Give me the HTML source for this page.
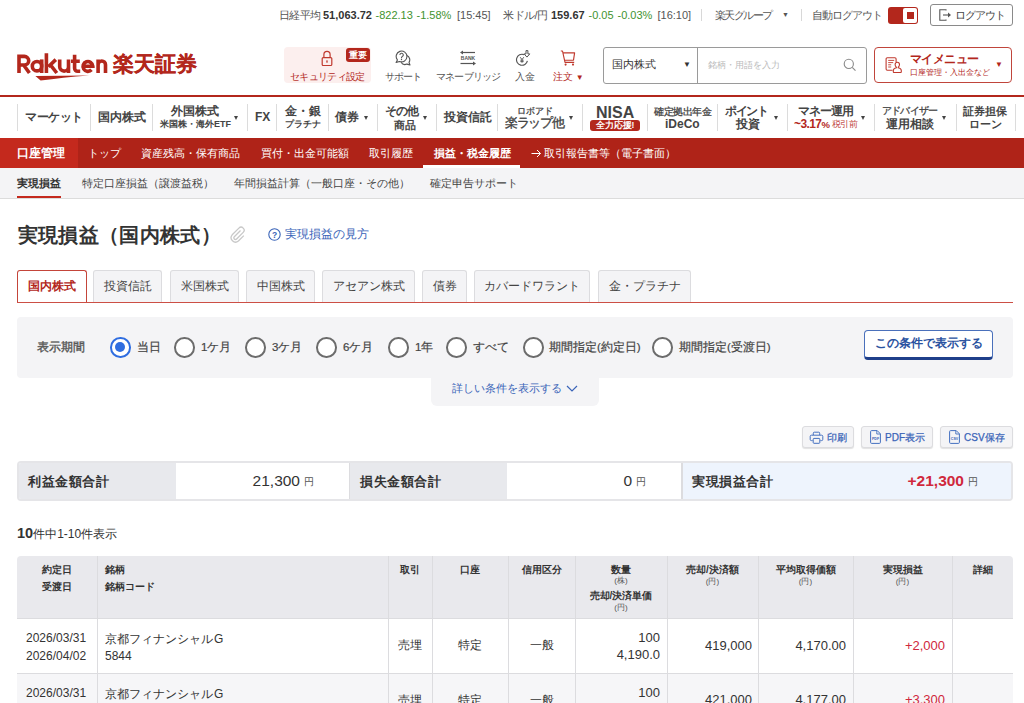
<!DOCTYPE html>
<html lang="ja"><head><meta charset="utf-8">
<style>
*{box-sizing:border-box;margin:0;padding:0}
html,body{width:1024px;height:703px;overflow:hidden;background:#fff}
body{font-family:"Liberation Sans",sans-serif;color:#333;position:relative}
.a{position:absolute;white-space:nowrap}

/* top bar */
.tb{font-size:11px;line-height:14px;color:#555;top:8px}
.tb b{color:#333}
.a.gr{color:#3f932f}
.vsep{position:absolute;width:1px;background:#d8d8d8}
/* header */
.hicon{position:absolute}
.hlbl{font-size:9.5px;line-height:12px;color:#555;top:71px}
/* nav */
.nsep{position:absolute;top:104px;height:27px;width:1px;background:#dcdcdc}
.nv{font-size:12px;font-weight:bold;color:#444;line-height:14px}
.ns{font-size:9px;font-weight:bold;color:#444;line-height:11px}
.tri2{width:0;height:0;border-left:2.7px solid transparent;border-right:2.7px solid transparent;border-top:4.5px solid #444}

.ab{top:146px;font-size:11px;color:#fff;line-height:14px}
.sn{top:176px;font-size:11px;color:#444;line-height:14px}
.tab{top:270px;height:32px;background:#f4f4f6;border:1px solid #dcdcdf;border-bottom:none;border-radius:3px 3px 0 0;font-size:11.5px;color:#444;line-height:30px;text-align:center}
.tab.act{background:#fff;border-color:#c4453a;color:#b3271c;font-weight:bold;height:32px}
.rad{top:337px;width:20.5px;height:20.5px;border:2px solid #6c6c6c;border-radius:50%;background:#fff}
.rad.on{border-color:#2f6de0}
.rad.on::after{content:"";position:absolute;left:3.1px;top:3.1px;width:10.3px;height:10.3px;border-radius:50%;background:#2f6de0}
.rl{top:340px;font-size:11.5px;color:#444;line-height:14px;-webkit-text-stroke:0.2px #444}
.sbtn{top:426px;height:22px;background:#f4f4f6;border:1px solid #dcdcdf;border-radius:3px;box-shadow:0 1px 1px rgba(0,0,0,.12)}
.bt{top:431px;font-size:10px;color:#3a64b8;line-height:13px;-webkit-text-stroke:0.25px #3a64b8}
.sl{top:474px;font-size:13px;letter-spacing:0.6px;font-weight:bold;color:#333;line-height:16px}
.sv{top:472px;font-size:15.5px;color:#333;line-height:18px}
.yen{top:476px;font-size:9.5px;color:#555;line-height:12px}
.csep{position:absolute;top:556px;width:1px;height:160px;background:#dcdcdf}
.th{font-size:10px;font-weight:bold;color:#333;line-height:13px}
.ty{font-size:8px;font-weight:normal;color:#555}
.td{font-size:12px;color:#333;line-height:14px}
.a.red{color:#b3271c}
</style></head><body>

<!-- ===== TOP BAR ===== -->
<div class="a tb" style="left:279px;letter-spacing:-0.6px">日経平均</div><div class="a tb" style="left:323px"><b>51,063.72</b></div><div class="a tb gr" style="left:375.5px">-822.13</div><div class="a tb gr" style="left:416.5px">-1.58%</div><div class="a tb" style="left:457px">[15:45]</div>
<div class="a tb" style="left:503px;letter-spacing:-0.5px">米ドル/円</div><div class="a tb" style="left:551px"><b>159.67</b></div><div class="a tb gr" style="left:588.5px">-0.05</div><div class="a tb gr" style="left:617.5px">-0.03%</div><div class="a tb" style="left:657.5px">[16:10]</div>
<div class="vsep" style="left:701px;top:9px;height:12px"></div>
<div class="a tb" style="left:715px;letter-spacing:-1.6px">楽天グループ</div><div class="a tb" style="left:782px;font-size:7px">▼</div>
<div class="vsep" style="left:801px;top:9px;height:12px"></div>
<div class="a tb" style="left:812px;letter-spacing:-1px">自動ログアウト</div>
<div class="a" style="left:888px;top:7px;width:30px;height:17px;background:#b3271c;border-radius:3px"></div>
<div class="a" style="left:903px;top:8px;width:14px;height:15px;background:#fff;border-radius:2px"></div>
<div class="a" style="left:907px;top:12px;width:7px;height:7px;background:#b3271c"></div>
<div class="a" style="left:930px;top:4px;width:83px;height:22px;border:1px solid #8a8a8a;border-radius:3px"></div>
<svg class="a" style="left:939px;top:9px" width="13" height="12" viewBox="0 0 13 12"><path d="M7 1.5V0.8H0.8v10.4H7v-0.7" fill="none" stroke="#555" stroke-width="1.1"/><path d="M4 6h6.5" stroke="#555" stroke-width="1.1"/><path d="M9 3.5L12 6 9 8.5z" fill="#555"/></svg>
<div class="a" style="left:955px;top:8px;font-size:11px;letter-spacing:-1px;line-height:14px;color:#444">ログアウト</div>

<!-- ===== HEADER ===== -->
<svg class="a" style="left:0;top:40px" width="112" height="45" viewBox="0 40 112 45"><g fill="none" stroke="#b3271c" stroke-width="3.6">
<path d="M19 73V56.4h5.4a4.3 4.3 0 0 1 0 8.6H19M23.8 65.2l5.6 7.8"/>
<circle cx="37" cy="66.2" r="4.7"/><path d="M41.7 59.4V73"/>
<path d="M46.4 53.2V73M55.8 59.6l-7.4 7.2M50.6 65.2l6.2 7.8"/>
<path d="M59.7 59.4v7.3a4.4 4.4 0 0 0 8.8 0V59.4M68.5 66v7"/>
<path d="M74.6 54.7v13.6a3 3 0 0 0 3 3h2.6M71 61.3h8.8"/>
<path d="M83 66.2h9.8a4.9 4.9 0 1 0-1.3 3.6"/>
<path d="M98.1 59.4V73M98.1 73v-8.3a3.7 3.7 0 0 1 7.4 0V73"/>
</g><path d="M35.4 76.1L89.2 75.5Q62 77.6 40.6 80.6Z" fill="#b3271c"/></svg>
<div class="a" style="left:113px;top:52px;font-size:20.5px;font-weight:bold;color:#b3271c;line-height:24px;-webkit-text-stroke:0.3px #b3271c">楽天証券</div>

<div class="a" style="left:284px;top:47px;width:87px;height:36px;background:#fcefee;border-radius:4px"></div>
<div class="a" style="left:346px;top:48px;width:24px;height:14px;background:#b3271c;border-radius:3px;color:#fff;font-size:8.5px;font-weight:bold;line-height:14px;text-align:center;letter-spacing:0px">重要</div>
<svg class="a" style="left:320px;top:50px" width="14" height="17" viewBox="0 0 14 17"><path d="M3.9 7.6V4.4a3.1 3.1 0 0 1 6.2 0v3.2" fill="none" stroke="#c0392e" stroke-width="1.2"/><rect x="2.2" y="7.6" width="9.6" height="7.9" rx="1" fill="none" stroke="#c0392e" stroke-width="1.2"/><path d="M6.1 10.4h1.8L7.3 13h-.6z" fill="#c0392e"/></svg>
<div class="a hlbl red" style="left:290px;letter-spacing:-0.7px">セキュリティ設定</div>

<svg class="a" style="left:394px;top:50px" width="18" height="16" viewBox="0 0 18 16"><path d="M5.6 11.5A5.4 5.4 0 1 0 3.4 9.9L2.1 12.4Z" fill="#fff" stroke="#555" stroke-width="1.1" stroke-linejoin="round"/><path d="M12.9 5.6A4.6 4.6 0 0 1 15 12.4L16 14.9 12.9 14.1A4.8 4.8 0 0 1 7 12.3" fill="none" stroke="#555" stroke-width="1.1" stroke-linejoin="round"/><path d="M5.9 4.9a1.7 1.7 0 1 1 2.5 1.5c-.6.3-.9.7-.9 1.3v.5" fill="none" stroke="#555" stroke-width="1.1"/><circle cx="7.5" cy="9.5" r=".7" fill="#555"/></svg>
<div class="a hlbl" style="left:385px;letter-spacing:-1.1px">サポート</div>

<svg class="a" style="left:459px;top:50px" width="18" height="16" viewBox="0 0 18 16"><path d="M16 2.5H2.5" stroke="#555" stroke-width="1.2"/><path d="M4 0.5L1 2.5 4 4.5z" fill="#555"/><path d="M1.5 13.5H15" stroke="#555" stroke-width="1.2"/><path d="M14 11.5L17 13.5 14 15.5z" fill="#555"/><text x="9" y="9.6" font-size="5" font-weight="bold" text-anchor="middle" fill="#555" font-family="Liberation Sans">BANK</text></svg>
<div class="a hlbl" style="left:436px;letter-spacing:-0.8px">マネーブリッジ</div>

<svg class="a" style="left:514px;top:50px" width="18" height="16" viewBox="0 0 18 16"><path d="M9.9 4.6A5.5 5.5 0 1 0 13.4 10.9" fill="none" stroke="#555" stroke-width="1.15"/><path d="M6.2 7.2L8 9.6l1.8-2.4M8 9.6v3.1M6.4 10.2h3.2M6.4 11.6h3.2" fill="none" stroke="#555" stroke-width="0.95"/><path d="M12 0.6h1.9v3.3h1.9l-2.85 3.2-2.85-3.2H12z" fill="#fff" stroke="#555" stroke-width="1" stroke-linejoin="round"/></svg>
<div class="a hlbl" style="left:515px">入金</div>

<svg class="a" style="left:560px;top:50px" width="16" height="16" viewBox="0 0 16 16"><path d="M0.8 1h1.7l2.5 11.3h9.2M3 2.8h11.6l-1.1 7.4H4.4" fill="none" stroke="#c0392e" stroke-width="1.15" stroke-linejoin="round"/><circle cx="5.6" cy="14.6" r="1.05" fill="#c0392e"/><circle cx="13" cy="14.6" r="1.05" fill="#c0392e"/></svg>
<div class="a hlbl red" style="left:553px">注文 <span style="font-size:8px">▼</span></div>

<!-- search -->
<div class="a" style="left:603px;top:47px;width:264px;height:37px;border:1px solid #9a9a9a;border-radius:3px"></div>
<div class="a" style="left:697px;top:47px;width:1px;height:37px;background:#9a9a9a"></div>
<div class="a" style="left:612px;top:57px;font-size:11px;line-height:14px;color:#333">国内株式</div>
<div class="a" style="left:683px;top:59px;font-size:8px;line-height:12px;color:#333">▼</div>
<div class="a" style="left:708px;top:59px;font-size:9.2px;line-height:12px;color:#bbb">銘柄・用語を入力</div>
<svg class="a" style="left:843px;top:58px" width="15" height="15" viewBox="0 0 15 15"><circle cx="5.8" cy="5.9" r="4.6" fill="none" stroke="#8a8a8a" stroke-width="1.1"/><path d="M9.2 9.3l3.3 3.4" stroke="#8a8a8a" stroke-width="1.1"/></svg>

<!-- my menu -->
<div class="a" style="left:874px;top:47px;width:138px;height:36px;border:1px solid #c0453b;border-radius:4px"></div>
<svg class="a" style="left:885px;top:57px" width="18" height="17" viewBox="0 0 18 17"><path d="M7.5 13.3H2.3a1.2 1.2 0 0 1-1.2-1.2V1.9A1.2 1.2 0 0 1 2.3.7h7.6a1.2 1.2 0 0 1 1.2 1.2v3" fill="none" stroke="#c0392e" stroke-width="1.1"/><path d="M3.2 3.4h6M3.2 5.6h5M3.2 7.8h3M3.2 10h3" stroke="#c0392e" stroke-width="0.9"/><path d="M12.3 5.2a2.2 2.4 0 0 1 2.2 2.4c0 1.2-.6 2.2-1.3 2.6v.6c1.8.4 3.1 1.3 3.1 2.8v1.2a.7.7 0 0 1-.7.7H9a.7.7 0 0 1-.7-.7v-1.2c0-1.5 1.3-2.4 3.1-2.8v-.6c-.7-.4-1.3-1.4-1.3-2.6a2.2 2.4 0 0 1 2.2-2.4z" fill="#fff" stroke="#c0392e" stroke-width="1.1"/></svg>
<div class="a red" style="left:910px;top:52px;font-size:12px;letter-spacing:-0.6px;font-weight:bold;line-height:14px">マイメニュー</div>
<div class="a red" style="left:910px;top:67px;font-size:8px;line-height:11px">口座管理・入出金など</div>
<div class="a red" style="left:995px;top:59px;font-size:8px;line-height:12px">▼</div>

<!-- ===== NAV ===== -->
<div class="a" style="left:0;top:95px;width:1024px;height:2px;background:#b3271c"></div>
<div class="nsep" style="left:17px"></div>
<div class="nsep" style="left:90px"></div>
<div class="nsep" style="left:152px"></div>
<div class="nsep" style="left:247px"></div>
<div class="nsep" style="left:276px"></div>
<div class="nsep" style="left:328px"></div>
<div class="nsep" style="left:377px"></div>
<div class="nsep" style="left:436px"></div>
<div class="nsep" style="left:497px"></div>
<div class="nsep" style="left:582px"></div>
<div class="nsep" style="left:647px"></div>
<div class="nsep" style="left:717px"></div>
<div class="nsep" style="left:787px"></div>
<div class="nsep" style="left:874px"></div>
<div class="nsep" style="left:956px"></div>
<div class="nsep" style="left:1015px"></div>

<div class="a nv" style="left:25px;top:110px;letter-spacing:-0.4px">マーケット</div>
<div class="a nv" style="left:98px;top:110px">国内株式</div>
<div class="a nv" style="left:171px;top:104px">外国株式</div>
<div class="a ns" style="left:160px;top:119px">米国株・海外ETF</div>
<div class="a tri2" style="left:234px;top:116px"></div>
<div class="a nv" style="left:255px;top:110px">FX</div>
<div class="a nv" style="left:285px;top:104px">金・銀</div>
<div class="a ns" style="left:285px;top:119px">プラチナ</div>
<div class="a nv" style="left:335px;top:110px">債券</div>
<div class="a tri2" style="left:364px;top:116px"></div>
<div class="a nv" style="left:385px;top:104px;letter-spacing:-0.9px">その他</div>
<div class="a nv" style="left:394px;top:118px;font-size:10.5px">商品</div>
<div class="a tri2" style="left:422.5px;top:116px"></div>
<div class="a nv" style="left:444px;top:110px">投資信託</div>
<div class="a ns" style="left:517px;top:105.5px;font-weight:normal;-webkit-text-stroke:0.3px #444">ロボアド</div>
<div class="a nv" style="left:505px;top:116px;font-size:13px;font-weight:normal;letter-spacing:-1.3px;-webkit-text-stroke:0.35px #444">楽ラップ他</div>
<div class="a tri2" style="left:569px;top:116px"></div>
<div class="a" style="left:596px;top:104px;font-size:16px;font-weight:bold;color:#444;line-height:17px">NISA</div>
<div class="a" style="left:590px;top:120px;width:50px;height:11px;background:#b3271c;border-radius:3px;color:#fff;font-size:8.5px;font-weight:bold;line-height:11px;text-align:center">全力応援!</div>
<div class="a ns" style="left:654px;top:106px;font-size:9.5px;letter-spacing:-0.4px;font-weight:normal;-webkit-text-stroke:0.3px #444">確定拠出年金</div>
<div class="a nv" style="left:665px;top:117px">iDeCo</div>
<div class="a nv" style="left:725px;top:104px;letter-spacing:-1.3px">ポイント</div>
<div class="a nv" style="left:736px;top:117px">投資</div>
<div class="a tri2" style="left:773.5px;top:116px"></div>
<div class="a nv" style="left:798px;top:104px;letter-spacing:-0.9px">マネー運用</div>
<div class="a" style="left:794px;top:118px;font-size:12px;font-weight:bold;color:#b3271c;line-height:12px;letter-spacing:-0.6px">~3.17<span style="font-size:9.5px;letter-spacing:0">%</span></div><div class="a" style="left:831.5px;top:119px;font-size:8.5px;color:#c0453b;line-height:11px;letter-spacing:-0.3px">税引前</div>
<div class="a tri2" style="left:861px;top:116px"></div>
<div class="a ns" style="left:882px;top:105px;font-weight:normal;font-size:10px;letter-spacing:-0.8px;-webkit-text-stroke:0.3px #444">アドバイザー</div>
<div class="a nv" style="left:886px;top:117px">運用相談</div>
<div class="a tri2" style="left:942px;top:116px"></div>
<div class="a nv" style="left:963px;top:104px;font-size:11px">証券担保</div>
<div class="a nv" style="left:969px;top:117px;font-size:11px">ローン</div>


<!-- ===== ACCOUNT BAR ===== -->
<div class="a" style="left:0;top:138px;width:1024px;height:30px;background:#af2318"></div>
<div class="a" style="left:0;top:138px;width:78px;height:30px;background:#c4291d"></div>
<div class="a" style="left:17px;top:146px;font-size:12px;font-weight:bold;color:#fff;line-height:14px">口座管理</div>
<div class="a ab" style="left:88px">トップ</div>
<div class="a ab" style="left:141px">資産残高・保有商品</div>
<div class="a ab" style="left:261px">買付・出金可能額</div>
<div class="a ab" style="left:369px">取引履歴</div>
<div class="a ab" style="left:434px;font-weight:bold">損益・税金履歴</div>
<div class="a" style="left:423px;top:165px;width:97px;height:3px;background:#fff"></div>
<svg class="a" style="left:531px;top:149px" width="11" height="9" viewBox="0 0 11 9"><path d="M0.5 4.5h9M6 1l3.5 3.5L6 8" fill="none" stroke="#fff" stroke-width="1"/></svg><div class="a ab" style="left:544px">取引報告書等（電子書面）</div>

<!-- ===== SUB NAV ===== -->
<div class="a" style="left:0;top:168px;width:1024px;height:31px;background:#f4f4f6;border-bottom:1px solid #dcdcdc"></div>
<div class="a sn" style="left:17px;font-weight:bold;color:#333">実現損益</div>
<div class="a" style="left:17px;top:196px;width:44px;height:2px;background:#c4291d"></div>
<div class="a sn" style="left:82px">特定口座損益（譲渡益税）</div>
<div class="a sn" style="left:234px">年間損益計算（一般口座・その他）</div>
<div class="a sn" style="left:430px">確定申告サポート</div>

<!-- ===== TITLE ===== -->
<div class="a" style="left:17.5px;top:222px;font-size:20px;font-weight:bold;color:#333;line-height:26px;letter-spacing:0.35px">実現損益（国内株式）</div>
<svg class="a" style="left:229px;top:225px" width="17" height="18" viewBox="0 0 17 18"><path d="M11.5 5.5L5.3 11.7a1.6 1.6 0 0 0 2.3 2.3l6.6-6.6a3 3 0 0 0-4.3-4.3L3.2 9.8a4.4 4.4 0 0 0 6.2 6.2l5.4-5.4" fill="none" stroke="#c8c8c8" stroke-width="1.3"/></svg>
<svg class="a" style="left:268px;top:228px" width="13" height="13" viewBox="0 0 13 13"><circle cx="6.5" cy="6.5" r="5.7" fill="none" stroke="#3a64b8" stroke-width="1.1"/><text x="6.5" y="9.6" font-size="8.5" font-weight="bold" text-anchor="middle" fill="#3a64b8" font-family="Liberation Sans">?</text></svg>
<div class="a" style="left:285px;top:227px;font-size:12px;color:#3a64b8;line-height:14px">実現損益の見方</div>

<!-- ===== TABS ===== -->
<div class="a tab act" style="left:17px;width:70px">国内株式</div>
<div class="a tab" style="left:93px;width:69px">投資信託</div>
<div class="a tab" style="left:170px;width:69px">米国株式</div>
<div class="a tab" style="left:246px;width:69px">中国株式</div>
<div class="a tab" style="left:322px;width:93px">アセアン株式</div>
<div class="a tab" style="left:422px;width:45px">債券</div>
<div class="a tab" style="left:474px;width:116px">カバードワラント</div>
<div class="a tab" style="left:598px;width:93px">金・プラチナ</div>

<div class="a" style="left:17px;top:302px;width:996px;height:1px;background:#cc4f45"></div>
<!-- ===== FILTER ===== -->
<div class="a" style="left:17px;top:317px;width:996px;height:61px;background:#f4f4f6;border-radius:4px"></div>
<div class="a" style="left:431px;top:370px;width:168px;height:36px;background:#f4f4f6;border-radius:0 0 6px 6px"></div>
<div class="a" style="left:37px;top:340px;font-size:11.5px;color:#555;line-height:14px;-webkit-text-stroke:0.35px #555">表示期間</div>
<div class="a rad on" style="left:110px"></div><div class="a rl" style="left:137px">当日</div>
<div class="a rad" style="left:174px"></div><div class="a rl" style="left:201px">1ケ月</div>
<div class="a rad" style="left:245px"></div><div class="a rl" style="left:272px">3ケ月</div>
<div class="a rad" style="left:316px"></div><div class="a rl" style="left:343px">6ケ月</div>
<div class="a rad" style="left:388px"></div><div class="a rl" style="left:415px">1年</div>
<div class="a rad" style="left:446px"></div><div class="a rl" style="left:473px">すべて</div>
<div class="a rad" style="left:523px"></div><div class="a rl" style="left:549px">期間指定(約定日)</div>
<div class="a rad" style="left:652px"></div><div class="a rl" style="left:679px">期間指定(受渡日)</div>
<div class="a" style="left:864px;top:330px;width:129px;height:30px;background:#fff;border:1px solid #4a70bb;border-bottom:3px solid #1f3f8a;border-radius:4px;color:#2a52a0;font-size:12px;font-weight:bold;line-height:25px;text-align:center">この条件で表示する</div>
<div class="a" style="left:452px;top:381px;font-size:11px;color:#3a64b8;line-height:14px">詳しい条件を表示する</div>
<svg class="a" style="left:566px;top:385px" width="12" height="8" viewBox="0 0 12 8"><path d="M1 1l5 5 5-5" fill="none" stroke="#3a64b8" stroke-width="1.2"/></svg>

<!-- ===== BUTTONS ===== -->
<div class="a sbtn" style="left:802px;width:52px"></div>
<svg class="a" style="left:809px;top:431px" width="15" height="13" viewBox="0 0 15 13"><path d="M4.3 4V2.2a1 1 0 0 1 1-1h4.4a1 1 0 0 1 1 1V4" fill="none" stroke="#4470c0" stroke-width="1"/><path d="M3.6 9.6H2.4a1.2 1.2 0 0 1-1.2-1.2V5.4a1.2 1.2 0 0 1 1.2-1.2h10.2a1.2 1.2 0 0 1 1.2 1.2v3a1.2 1.2 0 0 1-1.2 1.2h-1.2" fill="none" stroke="#4470c0" stroke-width="1"/><rect x="4.2" y="7.4" width="6.6" height="4.9" rx="0.8" fill="none" stroke="#4470c0" stroke-width="1"/></svg>
<div class="a bt" style="left:827px">印刷</div>
<div class="a sbtn" style="left:861px;width:72px"></div>
<svg class="a" style="left:870px;top:430px" width="11" height="14" viewBox="0 0 11 14"><path d="M1.6 0.6h5.6l3.2 3.2v8.6a1 1 0 0 1-1 1H1.6a1 1 0 0 1-1-1V1.6a1 1 0 0 1 1-1z" fill="none" stroke="#4470c0" stroke-width="1"/><path d="M6.8 0.8v3.2h3.4" fill="none" stroke="#4470c0" stroke-width="0.9"/><text x="5.5" y="9.5" font-size="3.6" font-weight="bold" text-anchor="middle" fill="#3a64b8" font-family="Liberation Sans">PDF</text></svg>
<div class="a bt" style="left:885px">PDF表示</div>
<div class="a sbtn" style="left:940px;width:73px"></div>
<svg class="a" style="left:949px;top:430px" width="11" height="14" viewBox="0 0 11 14"><path d="M1.6 0.6h5.6l3.2 3.2v8.6a1 1 0 0 1-1 1H1.6a1 1 0 0 1-1-1V1.6a1 1 0 0 1 1-1z" fill="none" stroke="#4470c0" stroke-width="1"/><path d="M6.8 0.8v3.2h3.4" fill="none" stroke="#4470c0" stroke-width="0.9"/><text x="5.5" y="9.5" font-size="3.6" font-weight="bold" text-anchor="middle" fill="#3a64b8" font-family="Liberation Sans">CSV</text></svg>
<div class="a bt" style="left:964px">CSV保存</div>

<!-- ===== SUMMARY ===== -->
<div class="a" style="left:17px;top:461px;width:996px;height:40px;border:2px solid #e5e5e8;border-radius:4px;overflow:hidden;background:#fff">
  <div class="a" style="left:0;top:0;width:157px;height:36px;background:#e8e9ed"></div>
  <div class="a" style="left:330px;top:0;width:158px;height:36px;background:#e8e9ed;border-left:1px solid #dcdcdf"></div>
  <div class="a" style="left:662px;top:0;width:332px;height:36px;background:#eef4fd;border-left:2px solid #dcdcdf"></div>
</div>
<div class="a sl" style="left:28px">利益金額合計</div>
<div class="a sv" style="left:200px;width:100px;text-align:right">21,300</div><div class="a yen" style="left:304px">円</div>
<div class="a sl" style="left:360px">損失金額合計</div>
<div class="a sv" style="left:532px;width:100px;text-align:right">0</div><div class="a yen" style="left:636px">円</div>
<div class="a sl" style="left:692px">実現損益合計</div>
<div class="a sv" style="left:864px;width:100px;text-align:right;color:#d0283c;font-weight:bold">+21,300</div><div class="a yen" style="left:968px">円</div>

<div class="a" style="left:17px;top:525px;font-size:12px;color:#333;line-height:16px"><b style="font-size:14.5px">10</b>件中1-10件表示</div>

<!-- ===== TABLE ===== -->
<div class="a" style="left:17px;top:556px;width:996px;height:62px;background:#e9e9ed;border-radius:4px 4px 0 0"></div>
<div class="a" style="left:17px;top:618px;width:996px;height:1px;background:#dcdcdf"></div>
<div class="a" style="left:17px;top:619px;width:996px;height:54px;background:#fff"></div>
<div class="a" style="left:17px;top:673px;width:996px;height:1px;background:#dcdcdf"></div>
<div class="a" style="left:17px;top:674px;width:996px;height:40px;background:#f6f6f8"></div>
<div class="csep" style="left:97px"></div>
<div class="csep" style="left:388px"></div>
<div class="csep" style="left:432px"></div>
<div class="csep" style="left:508px"></div>
<div class="csep" style="left:575px"></div>
<div class="csep" style="left:667px"></div>
<div class="csep" style="left:758px"></div>
<div class="csep" style="left:853px"></div>
<div class="csep" style="left:952px"></div>

<div class="a th" style="left:17px;width:80px;top:561px;text-align:center;line-height:17px">約定日<br>受渡日</div>
<div class="a th" style="left:105px;top:561px;line-height:17px">銘柄<br>銘柄コード</div>
<div class="a th" style="left:388px;width:44px;top:563px;text-align:center">取引</div>
<div class="a th" style="left:432px;width:76px;top:563px;text-align:center">口座</div>
<div class="a th" style="left:508px;width:67px;top:563px;text-align:center">信用区分</div>
<div class="a th" style="left:575px;width:92px;top:563px;text-align:center">数量</div>
<div class="a th ty" style="left:575px;width:92px;top:574px;text-align:center">(株)</div>
<div class="a th" style="left:575px;width:92px;top:589px;text-align:center">売却/決済単価</div>
<div class="a th ty" style="left:575px;width:92px;top:601px;text-align:center">(円)</div>
<div class="a th" style="left:667px;width:91px;top:563px;text-align:center">売却/決済額</div>
<div class="a th ty" style="left:667px;width:91px;top:575px;text-align:center">(円)</div>
<div class="a th" style="left:758px;width:95px;top:563px;text-align:center">平均取得価額</div>
<div class="a th ty" style="left:758px;width:95px;top:575px;text-align:center">(円)</div>
<div class="a th" style="left:853px;width:99px;top:563px;text-align:center">実現損益</div>
<div class="a th ty" style="left:853px;width:99px;top:575px;text-align:center">(円)</div>
<div class="a th" style="left:952px;width:61px;top:563px;text-align:center">詳細</div>

<div class="a td" style="left:26px;top:629px;line-height:18px">2026/03/31<br>2026/04/02</div>
<div class="a td" style="left:105px;top:631px;line-height:17px">京都フィナンシャル<span style="margin-left:1px">G</span><br>5844</div>
<div class="a td" style="left:388px;width:44px;top:638px;text-align:center">売埋</div>
<div class="a td" style="left:432px;width:76px;top:638px;text-align:center">特定</div>
<div class="a td" style="left:508px;width:67px;top:638px;text-align:center">一般</div>
<div class="a td" style="left:575px;width:85px;top:629px;text-align:right;line-height:17px;font-size:13px">100<br>4,190.0</div>
<div class="a td" style="left:667px;width:85px;top:639px;text-align:right;font-size:13px">419,000</div>
<div class="a td" style="left:758px;width:88px;top:639px;text-align:right;font-size:13px">4,170.00</div>
<div class="a td" style="left:853px;width:92px;top:639px;text-align:right;color:#d0283c;font-size:13px">+2,000</div>

<div class="a td" style="left:26px;top:684px;line-height:18px">2026/03/31<br>2026/04/02</div>
<div class="a td" style="left:105px;top:686px;line-height:17px">京都フィナンシャル<span style="margin-left:1px">G</span><br>5844</div>
<div class="a td" style="left:388px;width:44px;top:693px;text-align:center">売埋</div>
<div class="a td" style="left:432px;width:76px;top:693px;text-align:center">特定</div>
<div class="a td" style="left:508px;width:67px;top:693px;text-align:center">一般</div>
<div class="a td" style="left:575px;width:85px;top:684px;text-align:right;line-height:17px;font-size:13px">100<br>4,180.0</div>
<div class="a td" style="left:667px;width:85px;top:693px;text-align:right;font-size:13px">421,000</div>
<div class="a td" style="left:758px;width:88px;top:693px;text-align:right;font-size:13px">4,177.00</div>
<div class="a td" style="left:853px;width:92px;top:693px;text-align:right;color:#d0283c;font-size:13px">+3,300</div>

</body></html>
